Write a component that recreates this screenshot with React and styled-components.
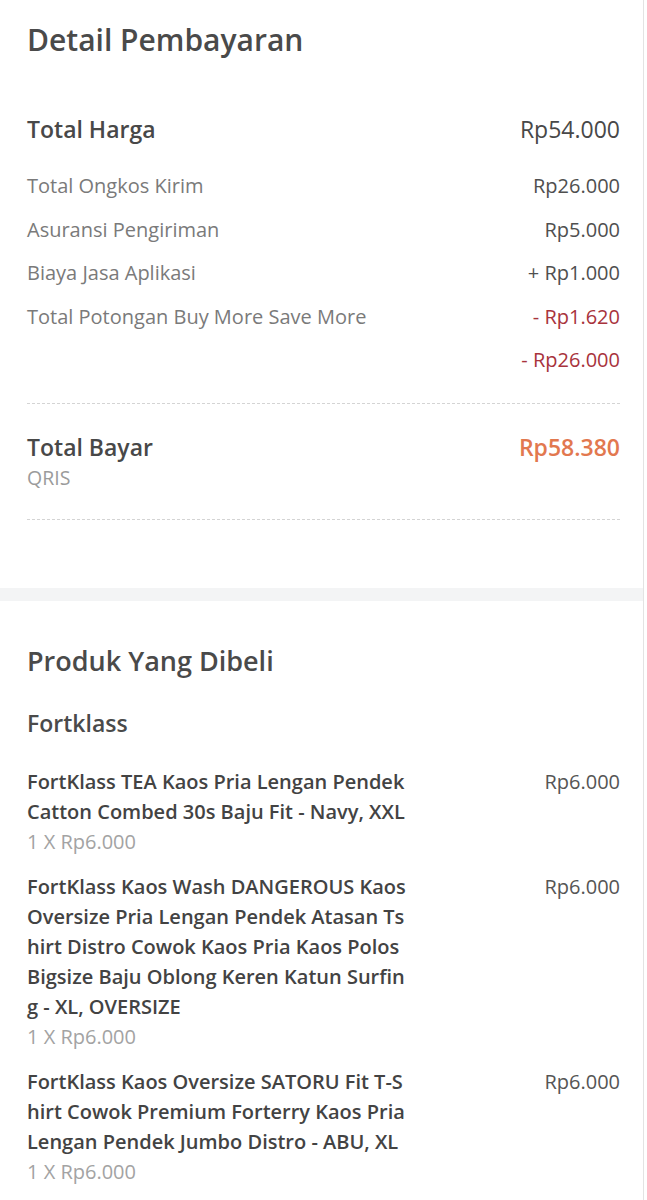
import React from "react";
import styled, { createGlobalStyle } from "styled-components";

const GlobalStyle = createGlobalStyle`
  html, body {
    margin: 0;
    padding: 0;
    background: #ffffff;
  }
  body {
    font-family: "Open Sans", "Noto Sans", sans-serif;
    -webkit-font-smoothing: antialiased;
  }
`;

const Page = styled.div`
  width: 643px;
  min-height: 1200px;
  border-right: 1px solid #e3e3e3;
  background: #ffffff;
`;

const Section = styled.section`
  padding: ${({ top }) => top}px 23px ${({ bottom }) => bottom}px 27px;
`;

const Band = styled.div`
  height: 13px;
  background: #f3f4f5;
`;

const Heading = styled.h2`
  margin: 0;
  font-size: ${({ size }) => size || 30}px;
  line-height: 40px;
  font-weight: 600;
  color: #4a4a4a;
`;

const Row = styled.div`
  display: flex;
  justify-content: space-between;
  align-items: center;
  height: ${({ h }) => h}px;
`;

const BigLabel = styled.span`
  font-size: 23px;
  font-weight: 600;
  color: #484848;
`;

const BigValue = styled.span`
  font-size: 23px;
  font-weight: ${({ accent }) => (accent ? 600 : 500)};
  color: ${({ accent }) => (accent ? "#e2784f" : "#484848")};
`;

const Label = styled.span`
  font-size: 20px;
  color: #7a7a7a;
`;

const Value = styled.span`
  font-size: 20px;
  color: ${({ tone }) => (tone === "red" ? "#a8333c" : "#4f4f4f")};
`;

const Details = styled.div`
  margin-top: 13px;
`;

const Dashed = styled.div`
  border-top: 1px dashed #d4d4d4;
  margin-top: ${({ mt }) => mt}px;
`;

const Method = styled.div`
  font-size: 19.5px;
  line-height: 30px;
  color: #9b9b9b;
`;

const ShopName = styled.h3`
  margin: 26px 0 0;
  font-size: 23px;
  line-height: 32px;
  font-weight: 600;
  color: #4a4a4a;
`;

const ProductList = styled.div`
  margin-top: 28px;
  display: flex;
  flex-direction: column;
  gap: 15px;
`;

const Product = styled.div`
  display: flex;
  justify-content: space-between;
  align-items: flex-start;
`;

const ProductInfo = styled.div`
  width: 390px;
`;

const NameLine = styled.div`
  font-size: 20px;
  line-height: 30px;
  font-weight: 600;
  color: #434343;
  white-space: nowrap;
`;

const Qty = styled.div`
  font-size: 20px;
  line-height: 30px;
  color: #a3a3a3;
`;

const Price = styled.div`
  font-size: 20px;
  line-height: 30px;
  color: #555555;
`;

const details = [
  { label: "Total Ongkos Kirim", value: "Rp26.000" },
  { label: "Asuransi Pengiriman", value: "Rp5.000" },
  { label: "Biaya Jasa Aplikasi", value: "+ Rp1.000" },
  { label: "Total Potongan Buy More Save More", value: "- Rp1.620", tone: "red" },
  { label: "", value: "- Rp26.000", tone: "red" },
];

// names are split the same way the app wraps them
const products = [
  {
    lines: ["FortKlass TEA Kaos Pria Lengan Pendek", "Catton Combed 30s Baju Fit - Navy, XXL"],
    qty: "1 X Rp6.000",
    price: "Rp6.000",
  },
  {
    lines: [
      "FortKlass Kaos Wash DANGEROUS Kaos",
      "Oversize Pria Lengan Pendek Atasan Ts",
      "hirt Distro Cowok Kaos Pria Kaos Polos",
      "Bigsize Baju Oblong Keren Katun Surfin",
      "g - XL, OVERSIZE",
    ],
    qty: "1 X Rp6.000",
    price: "Rp6.000",
  },
  {
    lines: [
      "FortKlass Kaos Oversize SATORU Fit T-S",
      "hirt Cowok Premium Forterry Kaos Pria",
      "Lengan Pendek Jumbo Distro - ABU, XL",
    ],
    qty: "1 X Rp6.000",
    price: "Rp6.000",
  },
];

export default function App() {
  return (
    <Page>
      <GlobalStyle />
      <Section top={20} bottom={68}>
        <Heading>Detail Pembayaran</Heading>
        <Row h={44} style={{ marginTop: 47 }}>
          <BigLabel>Total Harga</BigLabel>
          <BigValue>Rp54.000</BigValue>
        </Row>
        <Details>
          {details.map((d, i) => (
            <Row h={43.5} key={i}>
              <Label>{d.label}</Label>
              <Value tone={d.tone}>{d.value}</Value>
            </Row>
          ))}
        </Details>
        <Dashed mt={21} />
        <Row h={32} style={{ marginTop: 27 }}>
          <BigLabel>Total Bayar</BigLabel>
          <BigValue accent>Rp58.380</BigValue>
        </Row>
        <Method>QRIS</Method>
        <Dashed mt={26} />
      </Section>
      <Band />
      <Section top={40} bottom={20}>
        <Heading size={27}>Produk Yang Dibeli</Heading>
        <ShopName>Fortklass</ShopName>
        <ProductList>
          {products.map((p, i) => (
            <Product key={i}>
              <ProductInfo>
                {p.lines.map((l, j) => (
                  <NameLine key={j}>{l}</NameLine>
                ))}
                <Qty>{p.qty}</Qty>
              </ProductInfo>
              <Price>{p.price}</Price>
            </Product>
          ))}
        </ProductList>
      </Section>
    </Page>
  );
}
